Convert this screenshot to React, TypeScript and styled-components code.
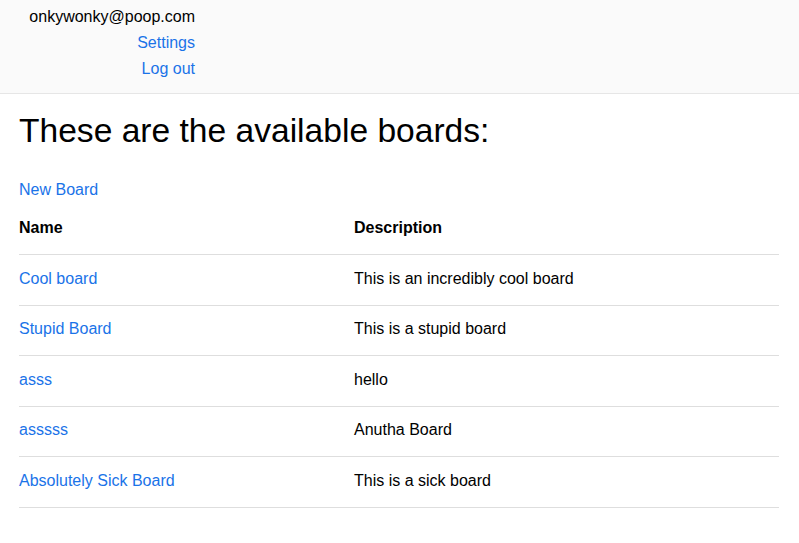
import React from "react";
import styled, { createGlobalStyle } from "styled-components";

const Global = createGlobalStyle`
  html, body { margin: 0; padding: 0; background: #fff; }
  body {
    font-family: "Liberation Sans", Arial, sans-serif;
    font-size: 16px;
    color: #000;
  }
`;

const TopBar = styled.header`
  background: #fafafa;
  border-bottom: 1px solid #e6e6e6;
  padding: 4px 0 11px;
`;

const UserMenu = styled.nav`
  width: 195px;
  display: flex;
  flex-direction: column;
  align-items: flex-end;
  line-height: 26px;
`;

const Email = styled.span`
  color: #000;
`;

const Link = styled.a`
  color: #1a73e8;
  text-decoration: none;
  cursor: pointer;
`;

const Main = styled.main`
  padding: 0 20px 0 19px;
`;

const Title = styled.h1`
  font-size: 33.6px;
  font-weight: 400;
  line-height: 1.2;
  margin: 16.8px 0 27px;
`;

const Actions = styled.div`
  line-height: 24px;
`;

const Table = styled.table`
  width: 100%;
  border-collapse: collapse;
  line-height: 24px;
`;

const HeadCell = styled.th<{ $w?: string }>`
  text-align: left;
  font-weight: 700;
  padding: 14px 0 14px;
  width: ${(p) => p.$w || "auto"};
  border-bottom: 1px solid #dedede;
`;

const Cell = styled.td`
  padding: 11.4px 0 14.2px;
  border-bottom: 1px solid #dedede;
`;

const boards = [
  { name: "Cool board", desc: "This is an incredibly cool board" },
  { name: "Stupid Board", desc: "This is a stupid board" },
  { name: "asss", desc: "hello" },
  { name: "asssss", desc: "Anutha Board" },
  { name: "Absolutely Sick Board", desc: "This is a sick board" },
];

export default function App() {
  return (
    <>
      <Global />
      <TopBar>
        <UserMenu>
          <Email>onkywonky@poop.com</Email>
          <Link>Settings</Link>
          <Link>Log out</Link>
        </UserMenu>
      </TopBar>
      <Main>
        <Title>These are the available boards:</Title>
        <Actions>
          <Link>New Board</Link>
        </Actions>
        <Table>
          <thead>
            <tr>
              <HeadCell $w="335px">Name</HeadCell>
              <HeadCell>Description</HeadCell>
            </tr>
          </thead>
          <tbody>
            {boards.map((b) => (
              <tr key={b.name}>
                <Cell>
                  <Link>{b.name}</Link>
                </Cell>
                <Cell>{b.desc}</Cell>
              </tr>
            ))}
          </tbody>
        </Table>
      </Main>
    </>
  );
}
